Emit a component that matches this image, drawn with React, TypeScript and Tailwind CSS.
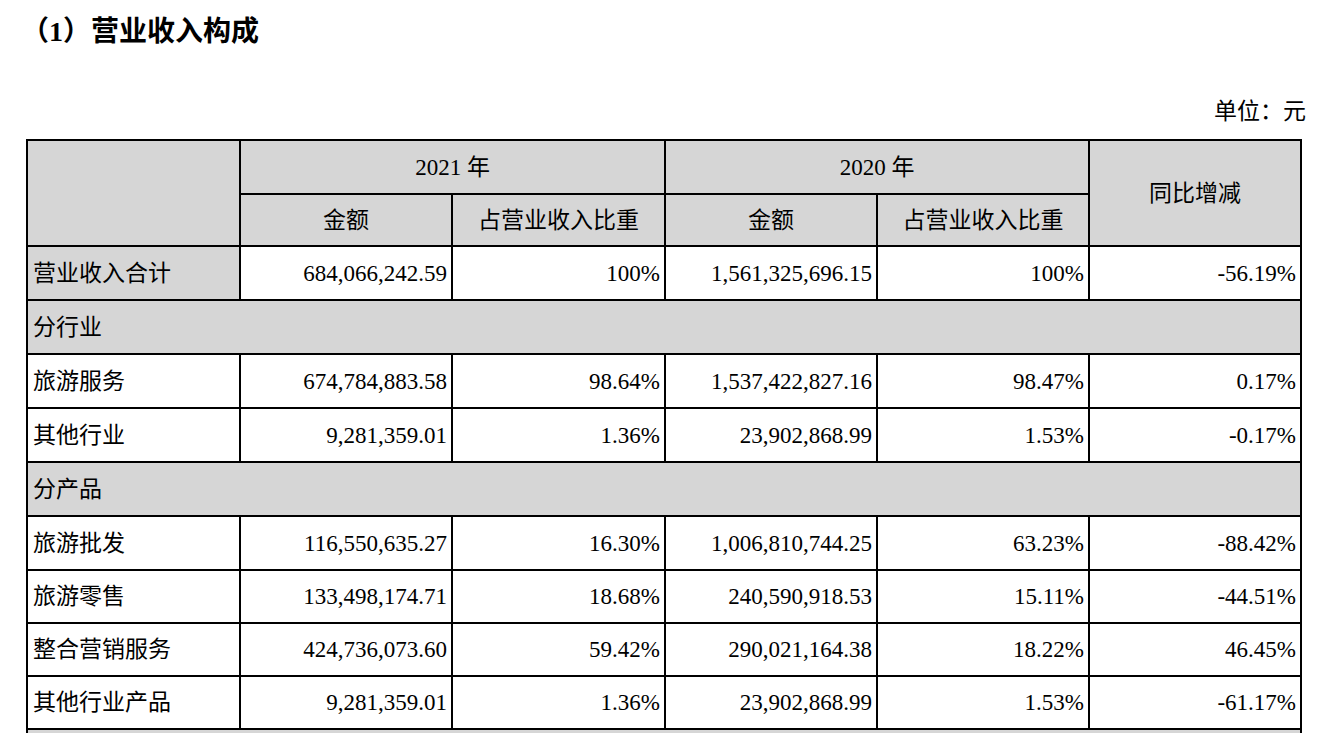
const ROWS: { label: string; cells: string[] }[] = [
  { label: '旅游服务', cells: ['674,784,883.58', '98.64%', '1,537,422,827.16', '98.47%', '0.17%'] },
  { label: '其他行业', cells: ['9,281,359.01', '1.36%', '23,902,868.99', '1.53%', '-0.17%'] },
];

const PRODUCTS: { label: string; cells: string[]; h: string }[] = [
  { label: '旅游批发', cells: ['116,550,635.27', '16.30%', '1,006,810,744.25', '63.23%', '-88.42%'], h: 'h-[54px]' },
  { label: '旅游零售', cells: ['133,498,174.71', '18.68%', '240,590,918.53', '15.11%', '-44.51%'], h: 'h-[53px]' },
  { label: '整合营销服务', cells: ['424,736,073.60', '59.42%', '290,021,164.38', '18.22%', '46.45%'], h: 'h-[53px]' },
  { label: '其他行业产品', cells: ['9,281,359.01', '1.36%', '23,902,868.99', '1.53%', '-61.17%'], h: 'h-[53px]' },
];

const td = 'border-2 border-black px-[4px] text-right align-middle whitespace-nowrap';
const th = 'border-2 border-black bg-[#d6d6d6] text-center align-middle font-normal';
const label = 'border-2 border-black pl-[5px] text-left align-middle whitespace-nowrap';

export default function App() {
  return (
    <div className="h-[733px] w-[1329px] overflow-hidden bg-white text-black font-['Liberation_Serif','Noto_Sans_CJK_SC',serif]">
      <h1 className="pl-[21px] pt-[12px] text-[28px] font-bold leading-[40px]">（1）营业收入构成</h1>
      <div className="mt-[45px] pr-[23px] text-right text-[23px] leading-[30px]">单位：元</div>

      <table className="ml-[26px] mt-[12px] table-fixed border-collapse text-[23px] leading-none">
        <colgroup>
          <col className="w-[213px]" />
          <col className="w-[212px]" />
          <col className="w-[213px]" />
          <col className="w-[212px]" />
          <col className="w-[212px]" />
          <col className="w-[212px]" />
        </colgroup>
        <thead>
          <tr className="h-[54px]">
            <th rowSpan={2} className={th}></th>
            <th colSpan={2} className={th}>2021 年</th>
            <th colSpan={2} className={th}>2020 年</th>
            <th rowSpan={2} className={th}>同比增减</th>
          </tr>
          <tr className="h-[52px]">
            <th className={th}>金额</th>
            <th className={th}>占营业收入比重</th>
            <th className={th}>金额</th>
            <th className={th}>占营业收入比重</th>
          </tr>
        </thead>
        <tbody>
          <tr className="h-[54px]">
            <td className={`${label} bg-[#d6d6d6]`}>营业收入合计</td>
            <td className={td}>684,066,242.59</td>
            <td className={td}>100%</td>
            <td className={td}>1,561,325,696.15</td>
            <td className={td}>100%</td>
            <td className={td}>-56.19%</td>
          </tr>
          <tr className="h-[54px]">
            <td colSpan={6} className={`${label} bg-[#d6d6d6]`}>分行业</td>
          </tr>
          {ROWS.map((r) => (
            <tr key={r.label} className="h-[54px]">
              <td className={label}>{r.label}</td>
              {r.cells.map((c, i) => (
                <td key={i} className={td}>{c}</td>
              ))}
            </tr>
          ))}
          <tr className="h-[54px]">
            <td colSpan={6} className={`${label} bg-[#d6d6d6]`}>分产品</td>
          </tr>
          {PRODUCTS.map((r) => (
            <tr key={r.label} className={r.h}>
              <td className={label}>{r.label}</td>
              {r.cells.map((c, i) => (
                <td key={i} className={td}>{c}</td>
              ))}
            </tr>
          ))}
          <tr className="h-[54px]">
            <td colSpan={6} className={`${label} bg-[#d6d6d6]`}></td>
          </tr>
        </tbody>
      </table>
    </div>
  );
}
